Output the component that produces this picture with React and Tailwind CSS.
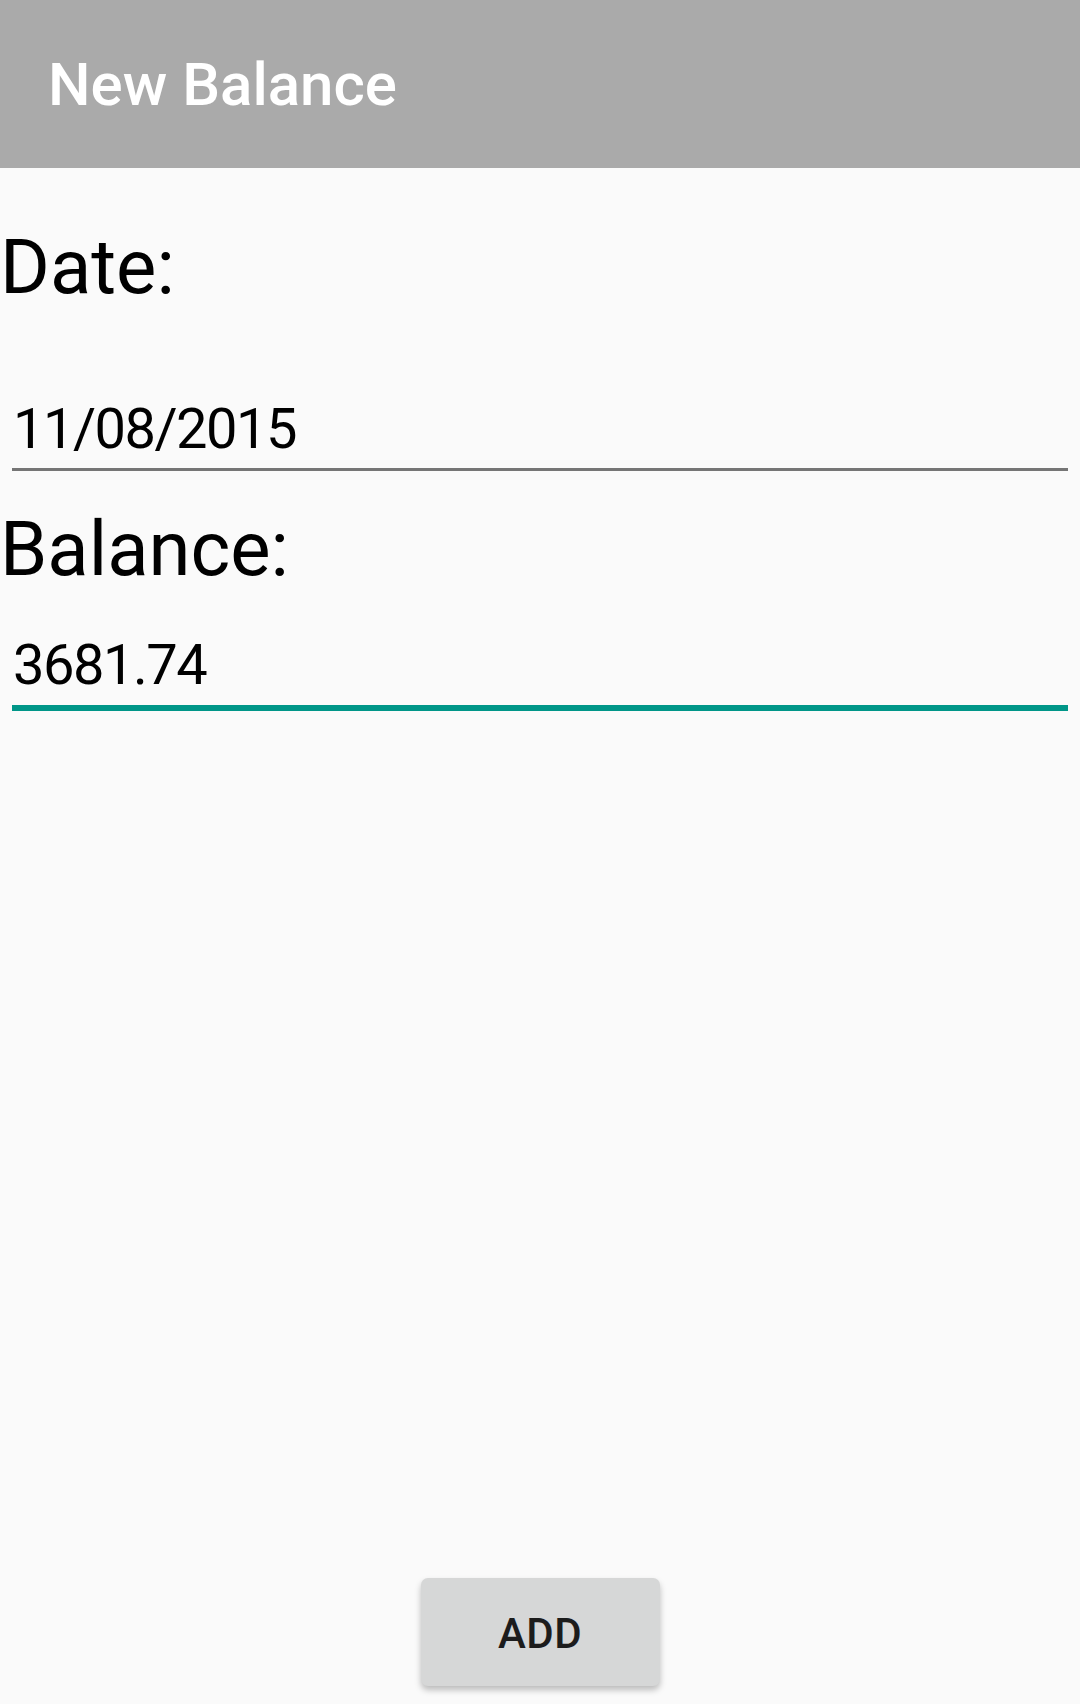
export default function App() {
    return (
        <div className="flex min-h-screen w-full flex-col bg-[#fafafa] font-['Roboto',sans-serif] text-black">
            {/* Toolbar */}
            <header className="flex h-[168px] w-full items-center bg-[#aaaaaa] pl-[48px]">
                <h1 className="pt-[2px] text-[60px] font-medium leading-none text-white">New Balance</h1>
            </header>

            {/* Form */}
            <div className="flex flex-col">
                <label className="mt-[61px] text-[76px] leading-none">Date:</label>
                <div className="mx-[12px] mt-[96px] flex flex-col">
                    <span className="pl-[1px] text-[56px] leading-none tracking-[-1.5px]">11/08/2015</span>
                    <div className="mt-[11px] h-[3px] w-full bg-[#757575]" />
                </div>

                <label className="mt-[40px] text-[76px] leading-none">Balance:</label>
                <div className="mx-[12px] mt-[50px] flex flex-col">
                    <span className="pl-[1px] text-[56px] leading-none tracking-[-1.5px]">3681.74</span>
                    <div className="mt-[12px] h-[6px] w-full bg-[#009688]" />
                </div>
            </div>

            <div className="flex-1" />

            {/* Action */}
            <div className="mb-[18px] flex justify-center">
                <button
                    type="button"
                    className="flex h-[108px] w-[239px] items-center justify-center rounded-[7px] bg-[#d6d7d7] pt-[4px] text-[42px] font-medium leading-none tracking-[0.5px] text-[#1c1c1c] shadow-[0_4px_6px_rgba(0,0,0,0.25)]"
                >
                    ADD
                </button>
            </div>
        </div>
    );
}
